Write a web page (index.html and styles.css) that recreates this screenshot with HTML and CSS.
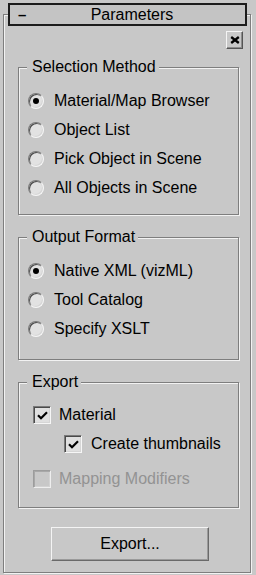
FILE: index.html
```html
<!DOCTYPE html>
<html>
<head>
<meta charset="utf-8">
<link rel="stylesheet" href="styles.css">
</head>
<body>
<div class="rollout">
  <div class="head">
    <span class="minus">–</span>
    <span class="title">Parameters</span>
    <span></span>
  </div>
  <div class="closerow">
    <button class="close" aria-label="Close">
      <svg width="10" height="8" viewBox="0 0 10 8"><path d="M1.2 1 L8.8 7 M8.8 1 L1.2 7" stroke="#000" stroke-width="2.3" fill="none"/></svg>
    </button>
  </div>

  <fieldset class="group g1">
    <legend>Selection Method</legend>
    <label class="row"><span class="radio on"></span><span>Material/Map Browser</span></label>
    <label class="row"><span class="radio"></span><span>Object List</span></label>
    <label class="row"><span class="radio"></span><span>Pick Object in Scene</span></label>
    <label class="row"><span class="radio"></span><span>All Objects in Scene</span></label>
  </fieldset>

  <fieldset class="group g2">
    <legend>Output Format</legend>
    <label class="row"><span class="radio on"></span><span>Native XML (vizML)</span></label>
    <label class="row"><span class="radio"></span><span>Tool Catalog</span></label>
    <label class="row"><span class="radio"></span><span>Specify XSLT</span></label>
  </fieldset>

  <fieldset class="group g3">
    <legend>Export</legend>
    <label class="row crow"><span class="check on"><svg width="11" height="9" viewBox="0 0 11 9"><path d="M1 4.2 L4 7.2 L10 1.2" stroke="#000" stroke-width="2.2" fill="none"/></svg></span><span>Material</span></label>
    <label class="row crow sub"><span class="check on"><svg width="11" height="9" viewBox="0 0 11 9"><path d="M1 4.2 L4 7.2 L10 1.2" stroke="#000" stroke-width="2.2" fill="none"/></svg></span><span>Create thumbnails</span></label>
    <label class="row crow dis"><span class="check off"></span><span>Mapping Modifiers</span></label>
  </fieldset>

  <button class="btn">Export...</button>
</div>
</body>
</html>
```

FILE: styles.css
```css
html, body {
  margin: 0;
  padding: 0;
  background: #c8c8c8;
}
body {
  font-family: "Liberation Sans", Arial, sans-serif;
  font-size: 16px;
  color: #000;
  width: 256px;
  height: 575px;
  overflow: hidden;
}
.rollout {
  margin: 14px 5px 2px 3px;
  border: 1px solid #7e7e7e;
  box-shadow: inset 1px 1px 0 #f2f2f2, 1px 1px 0 #f2f2f2;
  padding: 0 0 11px 0;
  display: flex;
  flex-direction: column;
  align-items: flex-start;
}
.head {
  margin: -12px 3px 0 4px;
  align-self: stretch;
  height: 23px;
  box-sizing: border-box;
  border: 2px solid #1c1c1c;
  background: #c4c4c4;
  display: grid;
  grid-template-columns: 1fr auto 1fr;
  align-items: center;
  line-height: 19px;
  padding: 0 0 0 8px;
}
.minus {
  font-weight: bold;
  font-size: 15px;
  line-height: 19px;
}
.title {
  text-align: center;
  margin-left: 1px;
}
.closerow {
  align-self: stretch;
  display: flex;
  justify-content: flex-end;
  margin-top: 5px;
  padding-right: 7px;
}
.close {
  width: 17px;
  height: 18px;
  padding: 0;
  margin: 0;
  box-sizing: border-box;
  background: #c8c8c8;
  border: 1px solid;
  border-color: #f4f4f4 #555 #555 #f4f4f4;
  box-shadow: inset -1px -1px 0 #8c8c8c;
  display: flex;
  align-items: center;
  justify-content: center;
}
.close svg { display: block; }

.group {
  margin: 0 0 0 14px;
  width: 221px;
  box-sizing: border-box;
  border: 1px solid #7e7e7e;
  box-shadow: inset 1px 1px 0 #f2f2f2, 1px 1px 0 #f2f2f2;
  padding: 10px 0 12px 0;
  min-inline-size: 0;
}
.group legend {
  margin-left: 8px;
  padding: 0 3px 0 5px;
  line-height: 18px;
  background: #c8c8c8;
}
.g1 { margin-top: 9px; }
.g2 { margin-top: 13px; padding-bottom: 16px; }
.g3 { margin-top: 13px; padding-top: 9px; padding-bottom: 14px; }

.row {
  display: flex;
  align-items: center;
  height: 29px;
  padding-left: 9px;
  gap: 10px;
  white-space: nowrap;
}
.radio {
  position: relative;
  width: 16px;
  height: 16px;
  box-sizing: border-box;
  border-radius: 50%;
  border: 1px solid;
  border-color: #7a7a7a #f6f6f6 #f6f6f6 #7a7a7a;
  box-shadow: inset 1px 1px 0 #4a4a4a, inset -1px -1px 0 #d6d6d6;
  background: #e2e2e2;
  flex: none;
}
.radio.on::after {
  content: "";
  position: absolute;
  inset: 0;
  margin: auto;
  width: 6px;
  height: 6px;
  border-radius: 50%;
  background: #000;
}
.crow {
  padding-left: 14px;
  gap: 8px;
}
.crow.sub { padding-left: 45px; gap: 9px; }
.crow.dis { margin-top: 6px; color: #939393; }
.check {
  width: 18px;
  height: 18px;
  box-sizing: border-box;
  border: 1px solid;
  border-color: #7a7a7a #f6f6f6 #f6f6f6 #7a7a7a;
  box-shadow: inset 1px 1px 0 #4a4a4a, inset -1px -1px 0 #d6d6d6;
  background: #e0e0e0;
  display: flex;
  align-items: center;
  justify-content: center;
  flex: none;
}
.check svg { display: block; margin-top: 1px; }
.check.off {
  border-color: #9c9c9c #eeeeee #eeeeee #9c9c9c;
  box-shadow: inset 1px 1px 0 #a8a8a8, inset -1px -1px 0 #d2d2d2;
  background: #c8c8c8;
}
.btn {
  margin: 19px 0 0 47px;
  width: 158px;
  height: 34px;
  box-sizing: border-box;
  padding: 0;
  font: inherit;
  color: #000;
  background: #c8c8c8;
  border: 1px solid;
  border-color: #f4f4f4 #6a6a6a #6a6a6a #f4f4f4;
  box-shadow: inset -1px -1px 0 #9a9a9a;
}
```
